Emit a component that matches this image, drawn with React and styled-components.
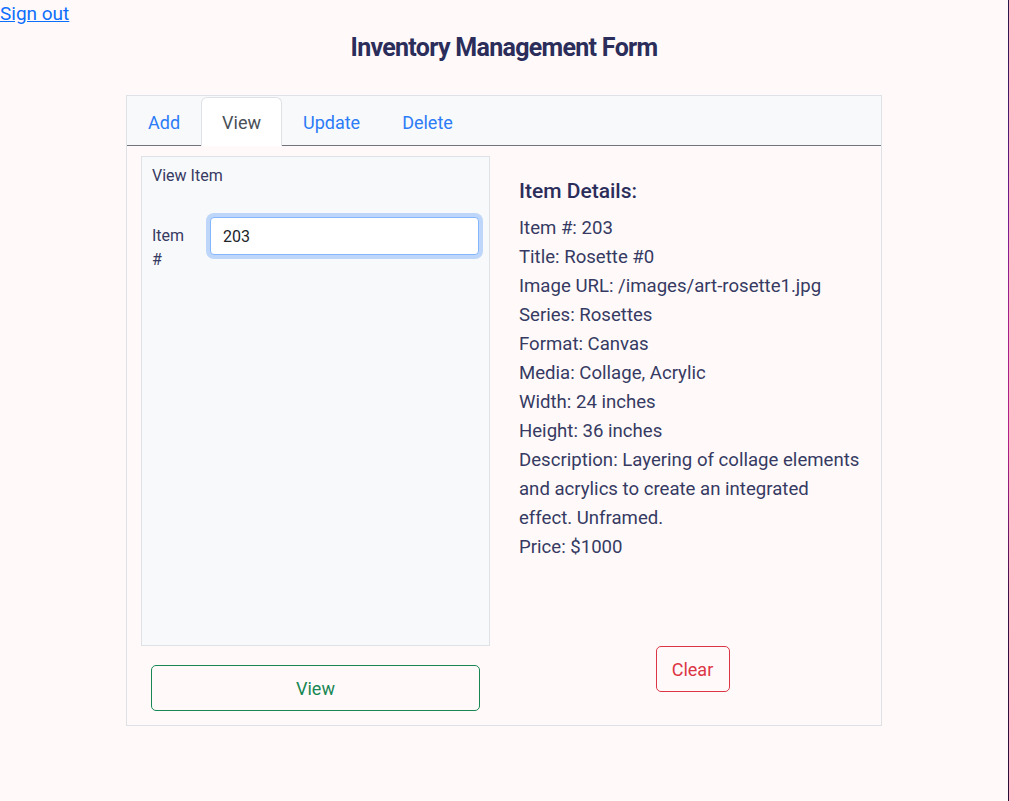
import { createGlobalStyle, styled } from "styled-components";

const GlobalStyle = createGlobalStyle`
  * { box-sizing: border-box; }
  body {
    margin: 0;
    background: #fffaf9;
    font-family: Roboto, "Noto Sans", sans-serif;
    color: #363a63;
  }
`;

const Page = styled.div`
  display: flex;
  min-height: 100vh;
`;

const Main = styled.div`
  flex: 1;
`;

const Edge = styled.div`
  width: 1px;
  background: linear-gradient(
    to bottom,
    #2a1747 0%,
    #4a1a70 15%,
    #7a1b92 28%,
    #a3208c 40%,
    #b0208a 55%,
    #8a1a7a 62%,
    #3a1045 75%,
    #2a0d3a 100%
  );
`;

const SignOut = styled.a`
  display: block;
  width: fit-content;
  font-size: 19px;
  line-height: 28px;
  color: #0d6efd;
  text-decoration: underline;
  cursor: pointer;
`;

const Title = styled.h1`
  margin: 2px 0 29px;
  text-align: center;
  font-weight: 700;
  font-size: 25px;
  letter-spacing: -0.7px;
  line-height: 36px;
  color: #2b2d5b;
`;

const Card = styled.div`
  width: 756px;
  margin: 0 auto;
  border: 1px solid #dee2e6;
`;

const TabBar = styled.div`
  display: flex;
  height: 50px;
  padding-top: 1px;
  background: #f8f9fa;
  border-bottom: 1px solid #70747c;
`;

const Tab = styled.div`
  display: flex;
  align-items: center;
  padding: 0 20px;
  font-size: 18px;
  margin-bottom: -1px;
  color: ${(p) => (p.$active ? "#495057" : "#2b7cf7")};
  background: ${(p) => (p.$active ? "#fff" : "transparent")};
  border: 1px solid ${(p) => (p.$active ? "#dee2e6" : "transparent")};
  border-bottom: none;
  border-radius: 6px 6px 0 0;
`;

const Body = styled.div`
  display: grid;
  grid-template-columns: 1fr 1fr;
  padding: 10px 0 14px;
`;

const Column = styled.div`
  display: flex;
  flex-direction: column;
  padding: 0 14px;
`;

const Panel = styled.div`
  height: 490px;
  padding: 10px;
  background: #f8f9fa;
  border: 1px solid #dee2e6;
`;

const PanelLabel = styled.div`
  font-size: 16px;
  line-height: 18px;
  color: #363a63;
`;

const FieldRow = styled.div`
  display: flex;
  gap: 14px;
  margin-top: 32px;
`;

const FieldLabel = styled.label`
  width: 44px;
  padding-top: 7px;
  font-size: 16px;
  line-height: 24px;
  color: #363a63;
`;

const Input = styled.input`
  flex: 1;
  height: 38px;
  padding: 0 12px;
  font-family: inherit;
  font-size: 16px;
  color: #212529;
  background: #fff;
  border: 1px solid #86b7fe;
  border-radius: 4px;
  box-shadow: 0 0 0 4px rgba(13, 110, 253, 0.25);
  outline: none;
`;

const OutlineButton = styled.button`
  height: 46px;
  font-family: inherit;
  font-size: 18px;
  background: transparent;
  border-radius: 5px;
  cursor: pointer;
  color: ${(p) => p.$color};
  border: 1px solid ${(p) => p.$color};
`;

const ViewButton = styled(OutlineButton)`
  margin: 19px 10px 0;
`;

const ClearButton = styled(OutlineButton)`
  align-self: center;
  width: 74px;
  margin-bottom: 19px;
`;

const Details = styled.div`
  flex: 1;
  padding: 21px 2px 0 1px;
`;

const DetailsTitle = styled.h3`
  margin: 0 0 9px;
  font-size: 21px;
  line-height: 28px;
  font-weight: 500;
  color: #2b2d5b;
`;

const DetailLine = styled.div`
  font-size: 18.6px;
  line-height: 29px;
  color: #363a63;
`;

const details = [
  "Item #: 203",
  "Title: Rosette #0",
  "Image URL: /images/art-rosette1.jpg",
  "Series: Rosettes",
  "Format: Canvas",
  "Media: Collage, Acrylic",
  "Width: 24 inches",
  "Height: 36 inches",
  "Description: Layering of collage elements and acrylics to create an integrated effect. Unframed.",
  "Price: $1000",
];

export default function App() {
  return (
    <Page>
      <GlobalStyle />
      <Main>
        <SignOut>Sign out</SignOut>
        <Title>Inventory Management Form</Title>
        <Card>
          <TabBar>
            <Tab>Add</Tab>
            <Tab $active>View</Tab>
            <Tab>Update</Tab>
            <Tab>Delete</Tab>
          </TabBar>
          <Body>
            <Column>
              <Panel>
                <PanelLabel>View Item</PanelLabel>
                <FieldRow>
                  <FieldLabel>Item #</FieldLabel>
                  <Input defaultValue="203" />
                </FieldRow>
              </Panel>
              <ViewButton $color="#198754">View</ViewButton>
            </Column>
            <Column>
              <Details>
                <DetailsTitle>Item Details:</DetailsTitle>
                {details.map((d) => (
                  <DetailLine key={d}>{d}</DetailLine>
                ))}
              </Details>
              <ClearButton $color="#dc3545">Clear</ClearButton>
            </Column>
          </Body>
        </Card>
      </Main>
      <Edge />
    </Page>
  );
}
